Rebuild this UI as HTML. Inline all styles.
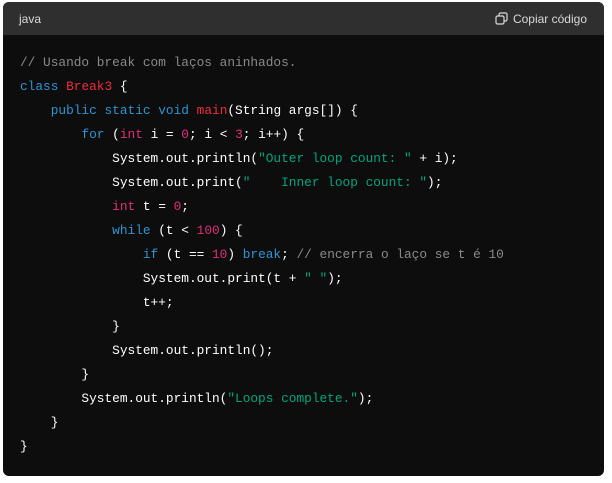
<!DOCTYPE html>
<html><head><style>
body{margin:0;background:#fff;width:612px;height:483px;overflow:hidden}
.box{position:absolute;left:3px;top:2px;width:601px;height:474px;background:#0d0d0d;border-radius:6px;overflow:hidden}
.hd{height:33px;background:#2f2f2f;color:#d9d9d9;font:12px "Liberation Sans",sans-serif;position:relative}
.hd .l{position:absolute;left:16px;top:10px}
.hd .r{position:absolute;right:17px;top:10px}
pre{margin:0;padding:16px 0 0 17px;font:12.8px/24px "Liberation Mono",monospace;color:#fff}
.k{color:#2e95d3}.t{color:#f22c3d}.n{color:#df3079}.s{color:#00a67d}.c{color:#8a8a8a}
</style></head><body>
<div class="box">
<div class="hd"><span class="l">java</span><span class="r"><svg width="13" height="13" viewBox="0 0 13 13" style="vertical-align:-2px;margin-right:5px" fill="none" stroke="#d9d9d9" stroke-width="1.2"><rect x="1" y="4" width="8" height="8" rx="1.5"/><path d="M4 4V2.5A1.5 1.5 0 0 1 5.5 1h5A1.5 1.5 0 0 1 12 2.5v5A1.5 1.5 0 0 1 10.5 9H9"/></svg>Copiar código</span></div>
<pre><span class="c">// Usando break com laços aninhados.</span>
<span class="k">class</span> <span class="t">Break3</span> {
    <span class="k">public</span> <span class="k">static</span> <span class="k">void</span> <span class="t">main</span>(String args[]) {
        <span class="k">for</span> (<span class="n">int</span> i = <span class="n">0</span>; i &lt; <span class="n">3</span>; i++) {
            System.out.println(<span class="s">"Outer loop count: "</span> + i);
            System.out.print(<span class="s">"    Inner loop count: "</span>);
            <span class="n">int</span> t = <span class="n">0</span>;
            <span class="k">while</span> (t &lt; <span class="n">100</span>) {
                <span class="k">if</span> (t == <span class="n">10</span>) <span class="k">break</span>; <span class="c">// encerra o laço se t é 10</span>
                System.out.print(t + <span class="s">" "</span>);
                t++;
            }
            System.out.println();
        }
        System.out.println(<span class="s">"Loops complete."</span>);
    }
}</pre>
</div>
</body></html>
